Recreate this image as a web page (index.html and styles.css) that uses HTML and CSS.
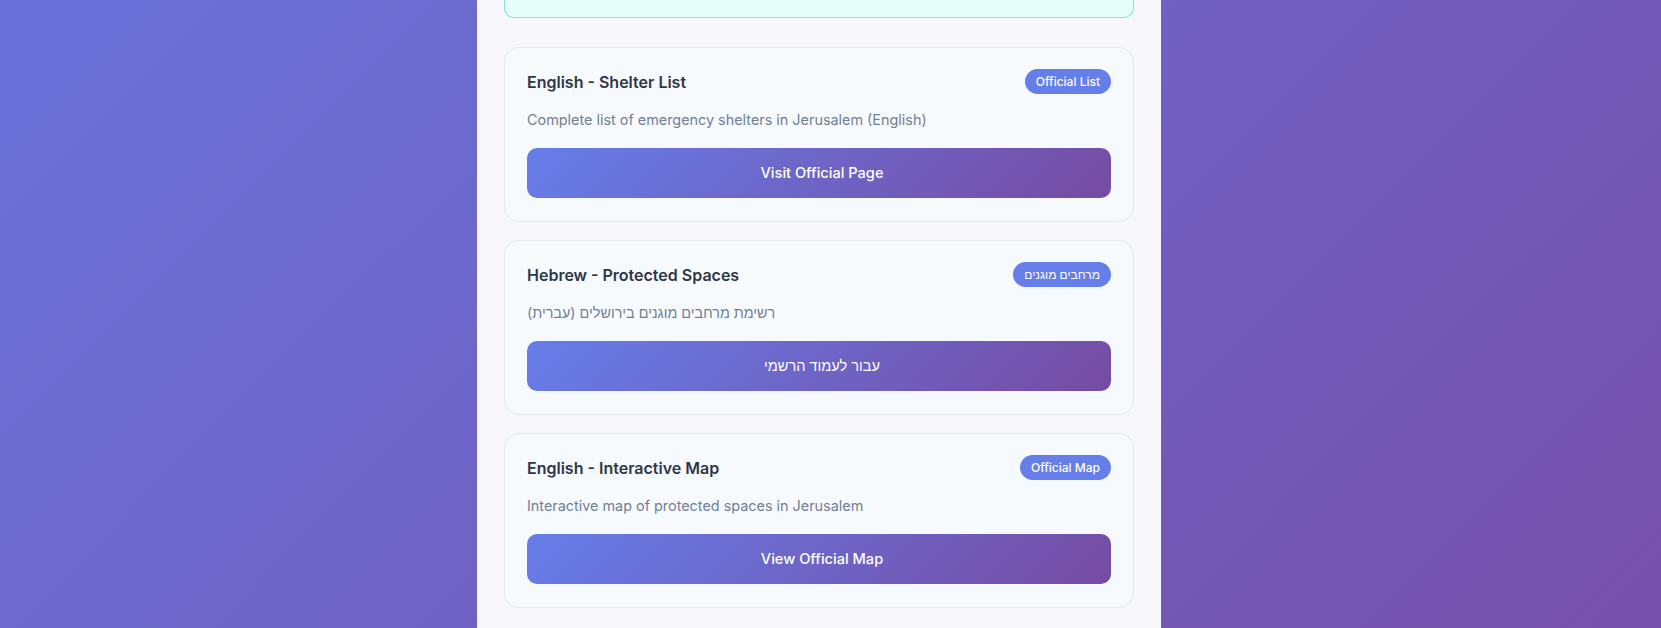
FILE: index.html
```html
<!DOCTYPE html>
<html lang="en">
<head>
<meta charset="utf-8">
<title>Jerusalem Shelters</title>
<link rel="stylesheet" href="styles.css">
</head>
<body>
<div class="page">
  <main class="panel">
    <div class="notice"></div>

    <section class="card">
      <div class="card-head">
        <h3 class="card-title">English - Shelter List</h3>
        <span class="badge">Official List</span>
      </div>
      <p class="card-desc">Complete list of emergency shelters in Jerusalem (English)</p>
      <a class="btn" href="#">Visit Official Page</a>
    </section>

    <section class="card">
      <div class="card-head">
        <h3 class="card-title">Hebrew - Protected Spaces</h3>
        <span class="badge">מרחבים מוגנים</span>
      </div>
      <p class="card-desc">רשימת מרחבים מוגנים בירושלים (עברית)</p>
      <a class="btn" href="#">עבור לעמוד הרשמי</a>
    </section>

    <section class="card">
      <div class="card-head">
        <h3 class="card-title">English - Interactive Map</h3>
        <span class="badge">Official Map</span>
      </div>
      <p class="card-desc">Interactive map of protected spaces in Jerusalem</p>
      <a class="btn" href="#">View Official Map</a>
    </section>
  </main>
</div>
</body>
</html>
```

FILE: styles.css
```css
* { box-sizing: border-box; }

html, body { height: 100%; }

body {
  margin: 0;
  padding: 0 23px 0 0;
  font-family: "Inter", "Liberation Sans", "DejaVu Sans", sans-serif;
  background: linear-gradient(135deg, #6a72da 0%, #7650ab 100%);
  min-height: 628px;
  overflow: hidden;
}

.page {
  width: 684px;
  margin: 0 auto;
  height: 100%;
}

.panel {
  background: #f8f8fc;
  padding: 0 27px 40px;
  min-height: 100%;
}

.notice {
  height: 18px;
  background: #e6fffa;
  border: 1px solid #81e6d9;
  border-top: none;
  border-radius: 0 0 10px 10px;
  margin-bottom: 29px;
}

.card {
  background: #f7fafc;
  border: 1px solid #e2e8f0;
  border-radius: 15px;
  padding: 21px 22px 23px;
  margin-bottom: 18.5px;
}

.card-head {
  display: flex;
  align-items: center;
  justify-content: space-between;
  height: 25px;
  margin-bottom: 15px;
}

.card-title {
  margin: 0;
  font-size: 16px;
  font-weight: 600;
  color: #2d3748;
}

.badge {
  background: #667eea;
  color: #ffffff;
  font-size: 12px;
  font-weight: 500;
  line-height: 15px;
  padding: 5px 11px;
  border-radius: 20px;
}

.card-desc {
  margin: 0 0 16px;
  font-size: 14.4px;
  line-height: 22.5px;
  color: #718096;
  direction: ltr;
  unicode-bidi: plaintext;
  text-align: left;
}

.btn {
  display: block;
  height: 50px;
  line-height: 50px;
  padding-left: 6px;
  text-align: center;
  text-decoration: none;
  color: #ffffff;
  font-size: 14.6px;
  font-weight: 500;
  border-radius: 10px;
  background: linear-gradient(135deg, #667eea 0%, #764ba2 100%);
}
```
